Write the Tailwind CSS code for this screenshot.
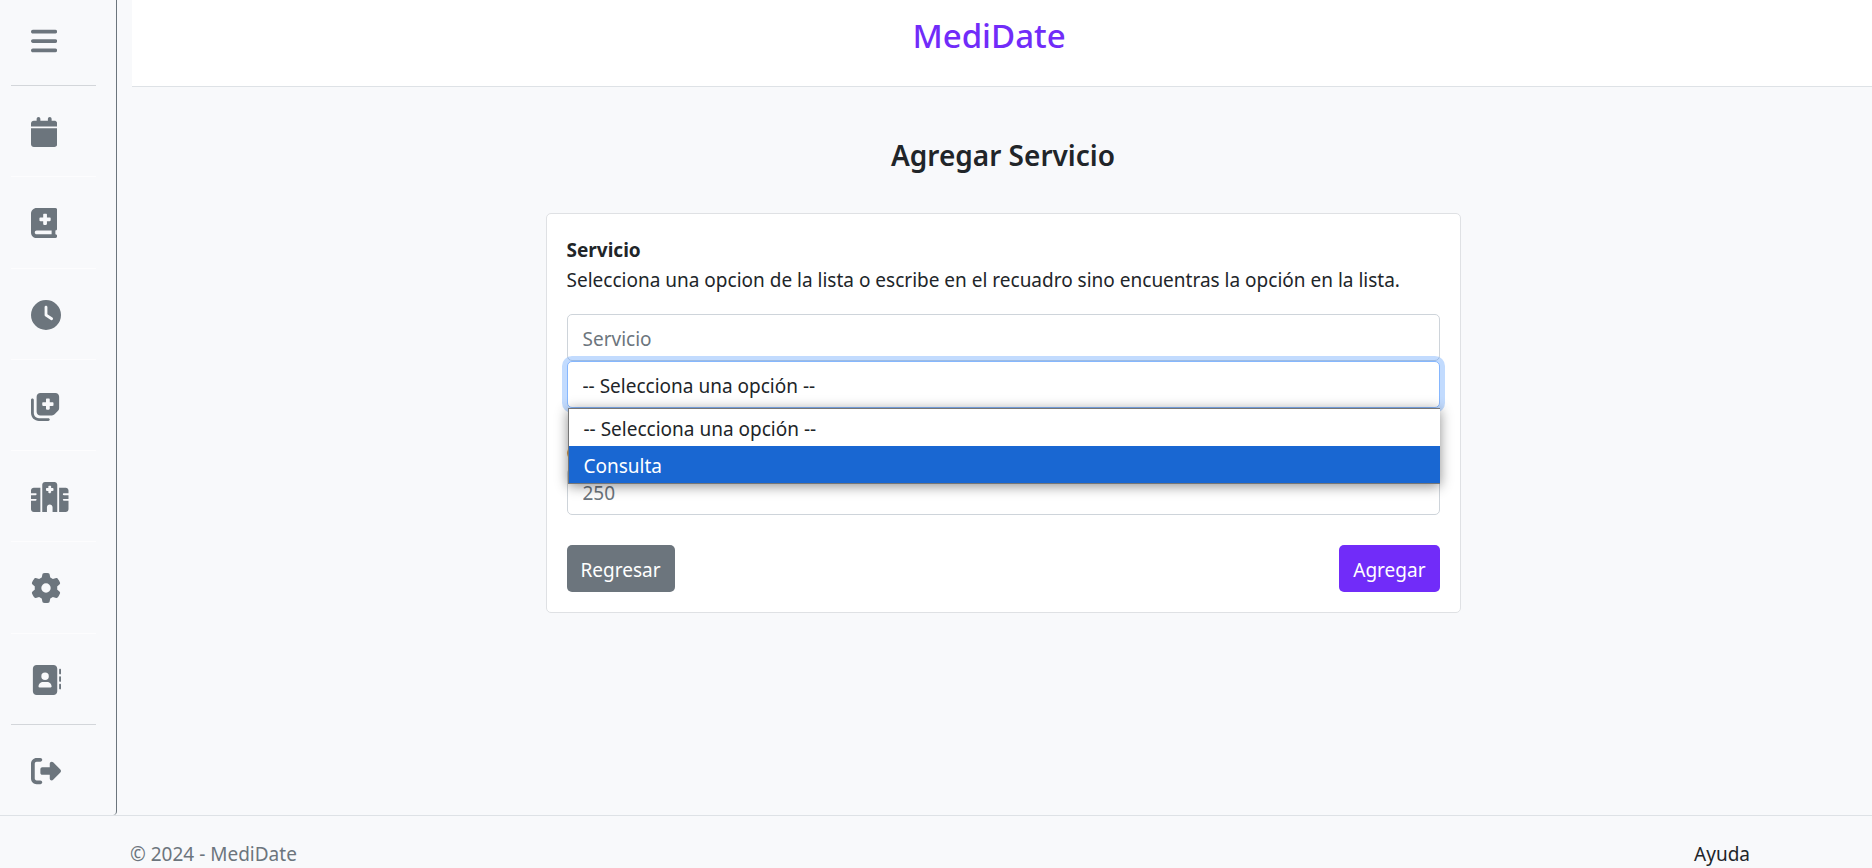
<!DOCTYPE html>
<html lang="es">
<head>
<meta charset="utf-8">
<meta name="viewport" content="width=device-width, initial-scale=1">
<title>MediDate - Agregar Servicio</title>
<script src="https://cdn.jsdelivr.net/npm/@tailwindcss/browser@4"></script>
</head>
<body class="flex min-h-screen flex-col bg-[#f8f9fb] font-['Segoe_UI','Noto_Sans',sans-serif] text-[19px] leading-[30px] text-[#212529]">
<div class="flex flex-1">
  <nav aria-label="Principal" class="flex w-[117px] shrink-0 rounded-br border-r border-[#6c757d] pr-5 pl-[11px] text-[#6c757d]">
    <ul class="flex w-full flex-col">
      <li class="flex h-[86px] items-center border-b border-[#d3d6da] pb-1 pl-5">
        <button type="button" aria-label="Menú"><svg class="block h-[30px]" viewBox="0 0 448 512" fill="currentColor"><path d="M0 96C0 78.300 14.300 64 32 64H416c17.700 0 32 14.300 32 32s-14.300 32-32 32H32C14.300 128 0 113.700 0 96zM0 256c0-17.700 14.300-32 32-32H416c17.700 0 32 14.300 32 32s-14.300 32-32 32H32c-17.700 0-32-14.300-32-32zM448 416c0 17.700-14.300 32-32 32H32c-17.700 0-32-14.300-32-32s14.300-32 32-32H416c17.700 0 32 14.300 32 32z"/></svg></button>
      </li>
      <li class="flex flex-1 items-center border-b border-[#fdfdfe] pt-0.5 pl-5">
        <a href="#" aria-label="Citas"><svg class="block h-[30px]" viewBox="0 0 448 512" fill="currentColor"><path d="M96 32V64H48C21.500 64 0 85.500 0 112v48H448V112c0-26.500-21.500-48-48-48H352V32c0-17.700-14.300-32-32-32s-32 14.300-32 32V64H160V32c0-17.700-14.300-32-32-32S96 14.300 96 32zM448 192H0V464c0 26.500 21.500 48 48 48H400c26.500 0 48-21.500 48-48V192z"/></svg></a>
      </li>
      <li class="flex flex-1 items-center border-b border-[#fdfdfe] pt-0.5 pl-5">
        <a href="#" aria-label="Historial"><svg class="block h-[30px]" viewBox="0 0 448 512" fill="currentColor"><path fill-rule="evenodd" d="M0 96C0 43 43 0 96 0H416c17.700 0 32 14.300 32 32V352c0 17.700-14.300 32-32 32v64c17.700 0 32 14.300 32 32s-14.300 32-32 32H96c-53 0-96-43-96-96V96zM64 416c0 17.700 14.300 32 32 32H352V384H96c-17.700 0-32 14.300-32 32zM208 112v48H160c-8.800 0-16 7.200-16 16v32c0 8.800 7.200 16 16 16h48v48c0 8.800 7.200 16 16 16h32c8.800 0 16-7.200 16-16V224h48c8.800 0 16-7.200 16-16V176c0-8.800-7.200-16-16-16H272V112c0-8.800-7.200-16-16-16H224c-8.800 0-16 7.200-16 16z"/></svg></a>
      </li>
      <li class="flex flex-1 items-center border-b border-[#fdfdfe] pt-0.5 pl-5">
        <a href="#" aria-label="Horarios"><svg class="block h-[30px]" viewBox="0 0 512 512" fill="currentColor"><path fill-rule="evenodd" d="M256 0a256 256 0 1 1 0 512A256 256 0 1 1 256 0zM232 120V256c0 8 4 15.500 10.700 20l96 64c11 7.400 25.900 4.400 33.300-6.700s4.400-25.900-6.700-33.300L280 243.200V120c0-13.300-10.700-24-24-24s-24 10.700-24 24z"/></svg></a>
      </li>
      <li class="flex flex-1 items-center border-b border-[#fdfdfe] pt-0.5 pl-5">
        <a href="#" aria-label="Servicios"><svg class="block h-[30px]" viewBox="0 0 512 512" fill="currentColor"><path fill-rule="evenodd" d="M96 352V96c0-35.300 28.700-64 64-64H416c35.300 0 64 28.700 64 64V293.500c0 17-6.700 33.300-18.700 45.300l-58.500 58.500c-12 12-28.300 18.700-45.300 18.700H160c-35.300 0-64-28.700-64-64zM272 128c-8.800 0-16 7.200-16 16v48H208c-8.800 0-16 7.200-16 16v32c0 8.800 7.200 16 16 16h48v48c0 8.800 7.200 16 16 16h32c8.800 0 16-7.200 16-16V256h48c8.800 0 16-7.200 16-16V208c0-8.800-7.200-16-16-16H320V144c0-8.800-7.200-16-16-16H272zm24 336c13.300 0 24 10.700 24 24s-10.700 24-24 24H136C60.900 512 0 451.100 0 376V152c0-13.300 10.700-24 24-24s24 10.700 24 24V376c0 48.600 39.400 88 88 88H296z"/></svg></a>
      </li>
      <li class="flex flex-1 items-center border-b border-[#fdfdfe] pt-0.5 pl-5">
        <a href="#" aria-label="Clínicas"><svg class="block h-[30px]" viewBox="0 0 640 512" fill="currentColor"><path fill-rule="evenodd" d="M192 48c0-26.500 21.500-48 48-48H400c26.500 0 48 21.500 48 48V512H368V432c0-26.500-21.500-48-48-48s-48 21.500-48 48v80H192V48zM48 96H160V512H48c-26.500 0-48-21.500-48-48V320H80c8.800 0 16-7.200 16-16s-7.200-16-16-16H0V224H80c8.800 0 16-7.200 16-16s-7.200-16-16-16H0V144c0-26.500 21.500-48 48-48zm544 0c26.500 0 48 21.500 48 48v48H560c-8.800 0-16 7.200-16 16s7.200 16 16 16h80v64H560c-8.800 0-16 7.200-16 16s7.200 16 16 16h80V464c0 26.500-21.500 48-48 48H480V96H592zM312 64c-8.800 0-16 7.200-16 16v24H272c-8.800 0-16 7.200-16 16v16c0 8.800 7.200 16 16 16h24v24c0 8.800 7.200 16 16 16h16c8.800 0 16-7.200 16-16V152h24c8.800 0 16-7.200 16-16V120c0-8.800-7.200-16-16-16H344V80c0-8.800-7.200-16-16-16H312z"/></svg></a>
      </li>
      <li class="flex flex-1 items-center border-b border-[#fdfdfe] pt-0.5 pl-5">
        <a href="#" aria-label="Configuración"><svg class="block h-[30px]" viewBox="0 0 512 512" fill="currentColor"><path fill-rule="evenodd" d="M495.900 166.600c3.200 8.700 .5 18.400-6.400 24.600l-43.300 39.400c1.100 8.300 1.700 16.800 1.700 25.400s-.6 17.100-1.700 25.400l43.300 39.400c6.900 6.200 9.600 15.900 6.400 24.600c-4.400 11.900-9.700 23.300-15.800 34.300l-4.700 8.100c-6.600 11-14 21.400-22.100 31.200c-5.900 7.200-15.700 9.600-24.500 6.800l-55.700-17.700c-13.400 10.300-28.200 18.900-44 25.400l-12.500 57.100c-2 9.100-9 16.300-18.200 17.800c-13.800 2.300-28 3.500-42.500 3.500s-28.700-1.200-42.500-3.500c-9.200-1.500-16.200-8.700-18.200-17.800l-12.500-57.100c-15.800-6.500-30.600-15.100-44-25.400L83.100 425.900c-8.800 2.800-18.600 .3-24.500-6.800c-8.100-9.800-15.500-20.200-22.100-31.200l-4.700-8.100c-6.100-11-11.400-22.400-15.800-34.300c-3.200-8.700-.5-18.400 6.400-24.600l43.300-39.400C64.600 273.100 64 264.600 64 256s.6-17.100 1.700-25.400L22.400 191.200c-6.900-6.200-9.600-15.900-6.400-24.600c4.400-11.900 9.700-23.300 15.800-34.300l4.700-8.100c6.600-11 14-21.400 22.100-31.200c5.900-7.200 15.700-9.600 24.500-6.800l55.700 17.700c13.400-10.300 28.200-18.900 44-25.400l12.500-57.100c2-9.100 9-16.300 18.200-17.800C227.300 1.200 241.500 0 256 0s28.700 1.200 42.500 3.500c9.200 1.500 16.200 8.700 18.200 17.800l12.500 57.100c15.800 6.500 30.600 15.100 44 25.400l55.700-17.700c8.800-2.800 18.600-.3 24.500 6.800c8.100 9.800 15.500 20.200 22.100 31.200l4.700 8.100c6.100 11 11.400 22.400 15.800 34.300zM256 336a80 80 0 1 0 0-160 80 80 0 1 0 0 160z"/></svg></a>
      </li>
      <li class="flex flex-1 items-center border-b border-[#d3d6da] pt-0.5 pl-5">
        <a href="#" aria-label="Contactos"><svg class="block h-[30px]" viewBox="0 0 512 512" fill="currentColor"><path fill-rule="evenodd" d="M96 0C60.700 0 32 28.700 32 64V448c0 35.300 28.700 64 64 64H384c35.300 0 64-28.700 64-64V64c0-35.300-28.700-64-64-64H96zM208 288h64c44.200 0 80 35.800 80 80c0 8.800-7.200 16-16 16H144c-8.800 0-16-7.200-16-16c0-44.200 35.800-80 80-80zm-32-96a64 64 0 1 1 128 0 64 64 0 1 1 -128 0zM512 80c0-8.800-7.200-16-16-16s-16 7.200-16 16v64c0 8.800 7.200 16 16 16s16-7.200 16-16V80zM496 192c-8.800 0-16 7.200-16 16v64c0 8.800 7.200 16 16 16s16-7.200 16-16V208c0-8.800-7.200-16-16-16zm16 144c0-8.800-7.200-16-16-16s-16 7.200-16 16v64c0 8.800 7.200 16 16 16s16-7.200 16-16V336z"/></svg></a>
      </li>
      <li class="flex flex-1 items-center pt-0.5 pl-5">
        <a href="#" aria-label="Salir"><svg class="block h-[30px]" viewBox="0 0 512 512" fill="currentColor"><path d="M377.900 105.900L500.700 228.700c7.200 7.200 11.300 17.100 11.300 27.300s-4.100 20.100-11.300 27.300L377.900 406.100c-6.400 6.400-15 9.900-24 9.900c-18.700 0-33.900-15.200-33.900-33.900l0-62.100-128 0c-17.700 0-32-14.300-32-32l0-64c0-17.700 14.300-32 32-32l128 0 0-62.100c0-18.700 15.200-33.900 33.900-33.900c9 0 17.600 3.600 24 9.900zM160 96L96 96c-17.700 0-32 14.300-32 32l0 256c0 17.700 14.300 32 32 32l64 0c17.700 0 32 14.300 32 32s-14.300 32-32 32l-64 0c-53 0-96-43-96-96L0 128C0 75 43 32 96 32l64 0c17.700 0 32 14.300 32 32s-14.300 32-32 32z"/></svg></a>
      </li>
    </ul>
  </nav>
  <div class="ml-[15px] flex-1">
    <header class="flex h-[87px] justify-center border-b border-[#dee2e6] bg-white pt-4 pr-[26px]">
      <a href="#" class="h-10 text-[33px] leading-10 font-medium text-[#712cf9]">MediDate</a>
    </header>
    <main class="pt-12 pr-5 pl-[22px]">
      <h1 class="text-center text-[28px] leading-10 font-semibold">Agregar Servicio</h1>
      <form class="mx-auto mt-[38px] w-full max-w-[915px] rounded-[5px] border border-[#dfe1e4] bg-white px-5 pt-[21px] pb-5">
        <label for="servicio" class="block font-bold">Servicio</label>
        <p class="mb-[19px]">Selecciona una opcion de la lista o escribe en el recuadro sino encuentras la opción en la lista.</p>
        <input id="servicio" type="text" placeholder="Servicio" class="block h-[47px] w-full rounded-[5px] border border-[#ced4da] bg-white px-[15px] pt-0.5 placeholder:text-[#6c757d]">
        <div class="relative">
          <select aria-label="Opciones de servicio" class="block h-[47px] w-full appearance-none rounded-[5px] border border-[#86b7fe] bg-white px-[15px] pt-0.5 ring-5 ring-[#0d6efd]/25 outline-none">
            <option>-- Selecciona una opción --</option>
            <option>Consulta</option>
          </select>
          <ul role="listbox" aria-label="Opciones" class="absolute top-full right-0 left-px z-10 border border-r-0 border-[#767676] bg-white leading-[34px] shadow-[0_2px_12px_rgba(0,0,0,0.45)]">
            <li role="option" aria-selected="false" class="px-[15px] pt-[3px]">-- Selecciona una opción --</li>
            <li role="option" aria-selected="true" class="bg-[#1967d2] px-[15px] pt-[3px] text-white">Consulta</li>
          </ul>
        </div>
        <label for="costo" class="mt-[30px] block font-bold">Costo</label>
        <input id="costo" type="text" inputmode="numeric" placeholder="250" class="block h-[47px] w-full rounded-[5px] border border-[#ced4da] bg-white px-[15px] pt-0.5 placeholder:text-[#6c757d]">
        <div class="mt-[30px] flex justify-between">
          <button type="button" class="h-[47px] rounded-[5px] bg-[#6c757d] px-[14px] pt-0.5 text-white">Regresar</button>
          <button type="submit" class="h-[47px] rounded-[5px] bg-[#712cf9] px-[14px] pt-0.5 text-white">Agregar</button>
        </div>
      </form>
    </main>
  </div>
</div>
<footer class="flex justify-between border-t border-[#dee2e6] pt-[25px] pr-[122px] pl-[130px] leading-[27px]">
  <span class="text-[#6c757d]">© 2024 - MediDate</span>
  <a href="#">Ayuda</a>
</footer>
</body>
</html>
